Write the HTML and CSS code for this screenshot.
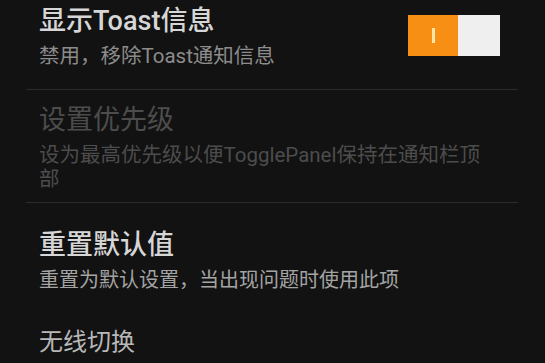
FILE: index.html
```html
<!DOCTYPE html>
<html lang="zh-CN">
<head>
    <meta charset="UTF-8">
    <meta name="viewport" content="width=device-width, initial-scale=1.0">
    <title>设置</title>
    <link rel="stylesheet" href="styles.css">
</head>
<body>
    <div class="list">
        <div class="item item-toast">
            <div class="text">
                <div class="title strong">显示Toast信息</div>
                <div class="summary">禁用，移除Toast通知信息</div>
            </div>
            <div class="switch">
                <div class="switch-on"><span class="mark"></span></div>
                <div class="switch-off"></div>
            </div>
        </div>

        <div class="item item-priority disabled">
            <div class="text">
                <div class="title">设置优先级</div>
                <div class="summary">设为最高优先级以便TogglePanel保持在通知栏顶部</div>
            </div>
        </div>

        <div class="item item-reset">
            <div class="text">
                <div class="title strong">重置默认值</div>
                <div class="summary light">重置为默认设置，当出现问题时使用此项</div>
            </div>
        </div>

        <div class="item item-wireless">
            <div class="text">
                <div class="title small">无线切换</div>
            </div>
        </div>
    </div>
</body>
</html>
```

FILE: styles.css
```css
body {
    margin: 0;
    background-color: #121212;
    font-family: Roboto, "Noto Sans CJK SC", sans-serif;
    overflow: hidden;
}
.list {
    padding: 0 27px 0 26px;
}
.item {
    display: flex;
    align-items: center;
    padding-left: 13px;
    border-bottom: 1px solid #2c2c2c;
}
.text {
    flex: 1;
    max-width: 450px;
}
.title {
    font-size: 27px;
    line-height: 36px;
    color: #d6d6d6;
}
.title.strong {
    font-weight: 500;
}
.title.small {
    font-size: 24px;
    color: #b8b8b8;
}
.summary {
    font-size: 20.5px;
    line-height: 24px;
    margin-top: 5px;
    color: #8c8c8c;
}
.summary.light {
    font-size: 20px;
    color: #a4a4a4;
}
.disabled .title,
.disabled .summary {
    color: #4c4c4c;
}
.item-toast {
    padding-top: 3px;
    padding-bottom: 21px;
}
.item-priority {
    padding-top: 12px;
    padding-bottom: 11px;
}
.item-reset {
    padding-top: 24px;
    padding-bottom: 20px;
    border-bottom: none;
}
.item-wireless {
    padding-top: 12px;
    border-bottom: none;
}
.switch {
    display: flex;
    height: 41px;
    margin-right: 18px;
    margin-top: 12px;
    align-self: flex-start;
}
.switch-on {
    width: 50px;
    background-color: #f78f14;
    display: flex;
    align-items: center;
    justify-content: center;
}
.mark {
    width: 3px;
    height: 15px;
    background-color: #ffe6a8;
}
.switch-off {
    width: 42px;
    background-color: #efefef;
}
```
